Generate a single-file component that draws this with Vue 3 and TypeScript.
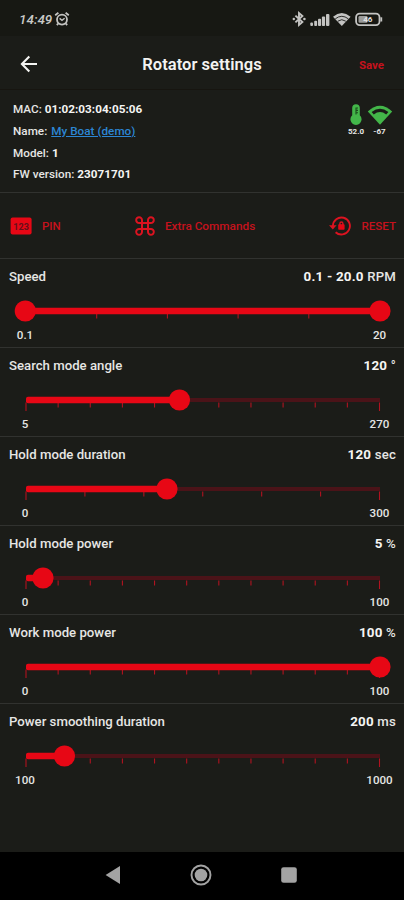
<script setup lang="ts">
interface Setting {
  label: string
  value: string
  unit: string
  min: string
  max: string
  intervals: number
  to: number
  range?: boolean
}

const settings: Setting[] = [
  { label: 'Speed', value: '0.1 - 20.0', unit: 'RPM', min: '0.1', max: '20', intervals: 5, to: 354, range: true },
  { label: 'Search mode angle', value: '120', unit: '°', min: '5', max: '270', intervals: 11, to: 153.5 },
  { label: 'Hold mode duration', value: '120', unit: 'sec', min: '0', max: '300', intervals: 6, to: 141 },
  { label: 'Hold mode power', value: '5', unit: '%', min: '0', max: '100', intervals: 11, to: 17 },
  { label: 'Work mode power', value: '100', unit: '%', min: '0', max: '100', intervals: 11, to: 354 },
  { label: 'Power smoothing duration', value: '200', unit: 'ms', min: '100', max: '1000', intervals: 11, to: 38.5 },
]

const tickX = (i: number, n: number): number => 26 + (i * 353.5) / n
</script>

<template>
  <div class="screen">
    <div class="status">
      <span class="clock">14:49</span>
      <svg class="alarm" width="16" height="16" viewBox="0 0 16 16" fill="none" stroke="#c4c4c2">
        <circle cx="8" cy="8.6" r="5" stroke-width="1.8" />
        <path d="M1.2 4.2 4.4 1.8M14.8 4.2 11.6 1.8M4.2 12.6 2.8 14M11.8 12.6l1.4 1.4" stroke-width="1.8" />
        <path d="M5.6 7.4 8 9.4l2.6-2.2" stroke-width="1.4" />
      </svg>
      <svg class="signals" width="92" height="18" viewBox="0 0 92 18">
        <g fill="none" stroke="#c4c4c2" stroke-width="1.9">
          <path d="M3.4 5.6 10.4 12 7 15V3l3.4 3-7 6.4" />
        </g>
        <g fill="#c4c4c2">
          <circle cx="1.8" cy="9" r="1.2" /><circle cx="12.4" cy="9" r="1.3" />
          <rect x="18.3" y="12.5" width="2.7" height="3.5" rx="1" />
          <rect x="22.2" y="10.8" width="2.9" height="5.2" rx="1" />
          <rect x="26" y="8.8" width="3.1" height="7.2" rx="1" />
          <rect x="29.9" y="6.4" width="3.2" height="9.6" rx="1" />
          <rect x="34" y="4" width="3.4" height="12" rx="1" />
          <path d="M41 6.8Q49.8-.6 58.6 6.8L49.8 16Z" />
        </g>
        <g fill="none" stroke="#1a1b17" stroke-width=".9">
          <path d="M43.3 8.8q6.5-5 13 0M45.8 11.2q4-3 8 0" />
        </g>
        <rect x="64.1" y="3.6" width="23.4" height="11.6" rx="3.6" fill="none" stroke="#c4c4c2" stroke-width="1.8" />
        <rect x="66.5" y="6" width="9" height="6.8" rx="1.2" fill="#9c9c9a" />
        <path d="M89.3 7.3v4.2" stroke="#c4c4c2" stroke-width="1.8" />
        <text x="75.8" y="12.3" class="charge">46</text>
      </svg>
    </div>

    <header class="header">
      <svg class="back" width="18" height="18" viewBox="0 0 18 18" fill="none" stroke="#f4f4f2" stroke-width="2.1">
        <path d="M17 9H2.2M9.3 1.6 1.9 9l7.4 7.4" />
      </svg>
      <h1>Rotator settings</h1>
      <button class="save">Save</button>
    </header>

    <section class="info">
      <div class="details">
        <p>MAC: <b>01:02:03:04:05:06</b></p>
        <p>Name: <a>My Boat (demo)</a></p>
        <p>Model: <b>1</b></p>
        <p>FW version: <b>23071701</b></p>
      </div>
      <div class="sensor">
        <svg width="14" height="22" viewBox="0 0 14 22">
          <path d="M3.2 4a3.8 3.8 0 0 1 7.6 0v7.2a5.6 5.6 0 1 1-7.6 0Z" fill="#43b649" />
          <path d="M7 3.4v7M7 4h2M7 6.4h2M7 8.8h2" stroke="#1b4d1d" stroke-width="1.1" />
        </svg>
        <span>52.0</span>
      </div>
      <div class="sensor wide">
        <svg width="26" height="22" viewBox="0 0 26 22">
          <path d="M.8 7.4Q13-4 25.2 7.4L13 20.8Z" fill="#43b649" />
          <path d="M4.6 8.1Q13 1.6 21.4 8.1L19.2 10.4Q13 5.8 6.8 10.4Z" fill="#1b1c18" />
        </svg>
        <span>-67</span>
      </div>
    </section>

    <nav class="actions">
      <button class="action">
        <svg width="22" height="18" viewBox="0 0 22 18">
          <rect x=".6" y=".4" width="21" height="17" rx="2" fill="#e70715" />
          <text x="11.1" y="12.7" class="digits">123</text>
        </svg>
        <span class="pin-text">PIN</span>
      </button>
      <button class="action">
        <svg width="20" height="20" viewBox="0 0 20 20" fill="none" stroke="#dc1320" stroke-width="2">
          <path d="M7 7V4.2A2.9 2.9 0 1 0 4.2 7H15.8A2.9 2.9 0 1 0 13 4.2V15.8A2.9 2.9 0 1 0 15.8 13H4.2A2.9 2.9 0 1 0 7 15.8Z" />
        </svg>
        <span class="extra-text">Extra Commands</span>
      </button>
      <button class="action">
        <svg width="22" height="20" viewBox="0 0 22 20">
          <path d="M3.9 10.5V9.8A8.5 8.5 0 1 1 6.6 16.2" fill="none" stroke="#dc1320" stroke-width="1.9" />
          <path d="M0 9.2h7.6L3.8 13.4Z" fill="#dc1320" />
          <rect x="9.2" y="8.3" width="6.4" height="5.4" rx=".8" fill="#e70715" />
          <path d="M10.9 9V7.5a1.5 1.5 0 0 1 3 0V9" fill="none" stroke="#dc1320" stroke-width="1.4" />
        </svg>
        <span class="reset-text">RESET</span>
      </button>
    </nav>

    <main>
      <section v-for="s in settings" :key="s.label" class="setting">
        <div class="caption">
          <span>{{ s.label }}</span>
          <span class="reading"><b>{{ s.value }}</b> {{ s.unit }}</span>
        </div>
        <svg class="slider" width="404" height="28" viewBox="0 0 404 28">
          <rect x="26" y="12" width="354" height="4" fill="#4b1318" />
          <line
            v-for="i in s.intervals + 1"
            :key="i"
            :x1="tickX(i - 1, s.intervals)"
            :x2="tickX(i - 1, s.intervals)"
            y1="16.5"
            :y2="i === 1 || i === s.intervals + 1 ? 25 : 21.5"
            :stroke-opacity="s.range && (i === 1 || i === s.intervals + 1) ? 0 : 1"
            stroke="#b11320"
            stroke-width="1.1"
          />
          <rect x="26" y="10.8" :width="s.to" height="6.4" rx="2" fill="#e70715" />
          <circle v-if="s.range" cx="25.3" cy="14" r="10.6" fill="#e70715" />
          <circle :cx="26 + s.to" cy="14" r="10.6" fill="#e70715" />
        </svg>
        <div class="limits">
          <span>{{ s.min }}</span>
          <span>{{ s.max }}</span>
        </div>
      </section>
    </main>

    <footer class="system-nav">
      <svg width="16" height="20" viewBox="0 0 16 20"><path d="M.6 10 15 1v18Z" fill="#a3a3a3" /></svg>
      <svg width="22" height="22" viewBox="0 0 22 22">
        <circle cx="11" cy="11" r="9.5" fill="none" stroke="#a3a3a3" stroke-width="1.9" />
        <circle cx="11" cy="11" r="6.3" fill="#a3a3a3" />
      </svg>
      <svg width="16" height="16" viewBox="0 0 16 16"><rect x=".2" y=".2" width="15.6" height="15.6" rx="2.4" fill="#a3a3a3" /></svg>
    </footer>
  </div>
</template>

<style>
body {
  background: #1b1c18;
}
</style>

<style scoped>
.screen {
  display: flex;
  flex-direction: column;
  width: 404px;
  height: 900px;
  overflow: hidden;
  background: #1b1c18;
  color: #e6e6e4;
  font-family: Roboto, 'Liberation Sans', sans-serif;
}
.screen * {
  box-sizing: border-box;
}
.status {
  display: flex;
  align-items: center;
  height: 36px;
  padding: 2px 20px 0 19px;
  background: #171813;
}
.clock {
  width: 33px;
  color: #c9c9c6;
  font-size: 13.5px;
  font-weight: 500;
  font-style: italic;
  white-space: nowrap;
}
.alarm {
  margin-left: 2px;
}
.signals {
  margin-left: auto;
}
.charge {
  fill: #e2e2e0;
  font-size: 8px;
  font-weight: 700;
  text-anchor: middle;
}
.header {
  display: grid;
  grid-template-columns: 80px 1fr 80px;
  align-items: center;
  height: 54px;
  padding-top: 3px;
  border-bottom: 1px solid #171510;
}
.back {
  margin-left: 20px;
}
h1 {
  margin: 0;
  color: #f3f3f1;
  font-size: 16.5px;
  font-weight: 600;
  letter-spacing: 0.05px;
  text-align: center;
  white-space: nowrap;
}
button {
  padding: 0;
  border: 0;
  background: none;
  color: #c5121d;
  font: 500 12px Roboto, sans-serif;
}
.save {
  padding: 2px 20px 0 0;
  font-size: 11.5px;
  font-weight: 700;
  text-align: right;
}
.info {
  display: flex;
  height: 102px;
  padding: 8px 11px 0 13px;
}
.details {
  flex: 1;
  padding-top: 1px;
}
p {
  margin: 0;
  font-size: 11.7px;
  font-weight: 500;
  letter-spacing: 0.03px;
  line-height: 21.8px;
  white-space: nowrap;
}
b {
  color: #f5f5f3;
  font-weight: 700;
}
a {
  margin-left: 1px;
  color: #2c86d4;
  text-decoration: underline;
}
.sensor {
  display: flex;
  flex-direction: column;
  align-items: center;
  width: 20px;
  padding-top: 6px;
  font-size: 8px;
  font-weight: 700;
  line-height: 9px;
}
.sensor:not(.wide) {
  margin-right: -1px;
}
.sensor span {
  margin-top: 1px;
}
.sensor.wide {
  width: 26px;
  margin-left: 2px;
}
.sensor.wide span {
  margin-right: 1px;
}
.actions {
  display: flex;
  align-items: center;
  justify-content: space-between;
  height: 66px;
  padding: 0 8px 0 10px;
  border-top: 1px solid #31322f;
}
.action {
  display: flex;
  align-items: center;
  gap: 10px;
}
.action span {
  white-space: nowrap;
}
.pin-text {
  font-size: 11.5px;
}
.extra-text {
  font-size: 11.8px;
}
.reset-text {
  font-size: 11.6px;
}
.digits {
  fill: #65101a;
  font-size: 9px;
  font-weight: 700;
  text-anchor: middle;
}
.setting {
  height: 89px;
  border-top: 1px solid #31322f;
}
.caption {
  display: flex;
  align-items: baseline;
  justify-content: space-between;
  height: 38px;
  padding: 8px 8px 0 9px;
  font-size: 13.2px;
  font-weight: 500;
  line-height: 20px;
}
.reading {
  letter-spacing: 0.2px;
}
.reading b {
  font-size: 13.4px;
}
.slider {
  display: block;
}
.limits {
  display: flex;
  justify-content: space-between;
  padding: 3.2px 4.5px 0 6px;
  font-size: 11.6px;
  font-weight: 500;
  line-height: 14px;
}
.limits span {
  width: 38px;
  text-align: center;
}
.limits span:last-child {
  width: 40px;
}
.system-nav {
  display: flex;
  align-items: center;
  justify-content: space-between;
  height: 48px;
  margin-top: auto;
  padding: 0 107px 2px 105px;
  background: #000;
}
</style>
